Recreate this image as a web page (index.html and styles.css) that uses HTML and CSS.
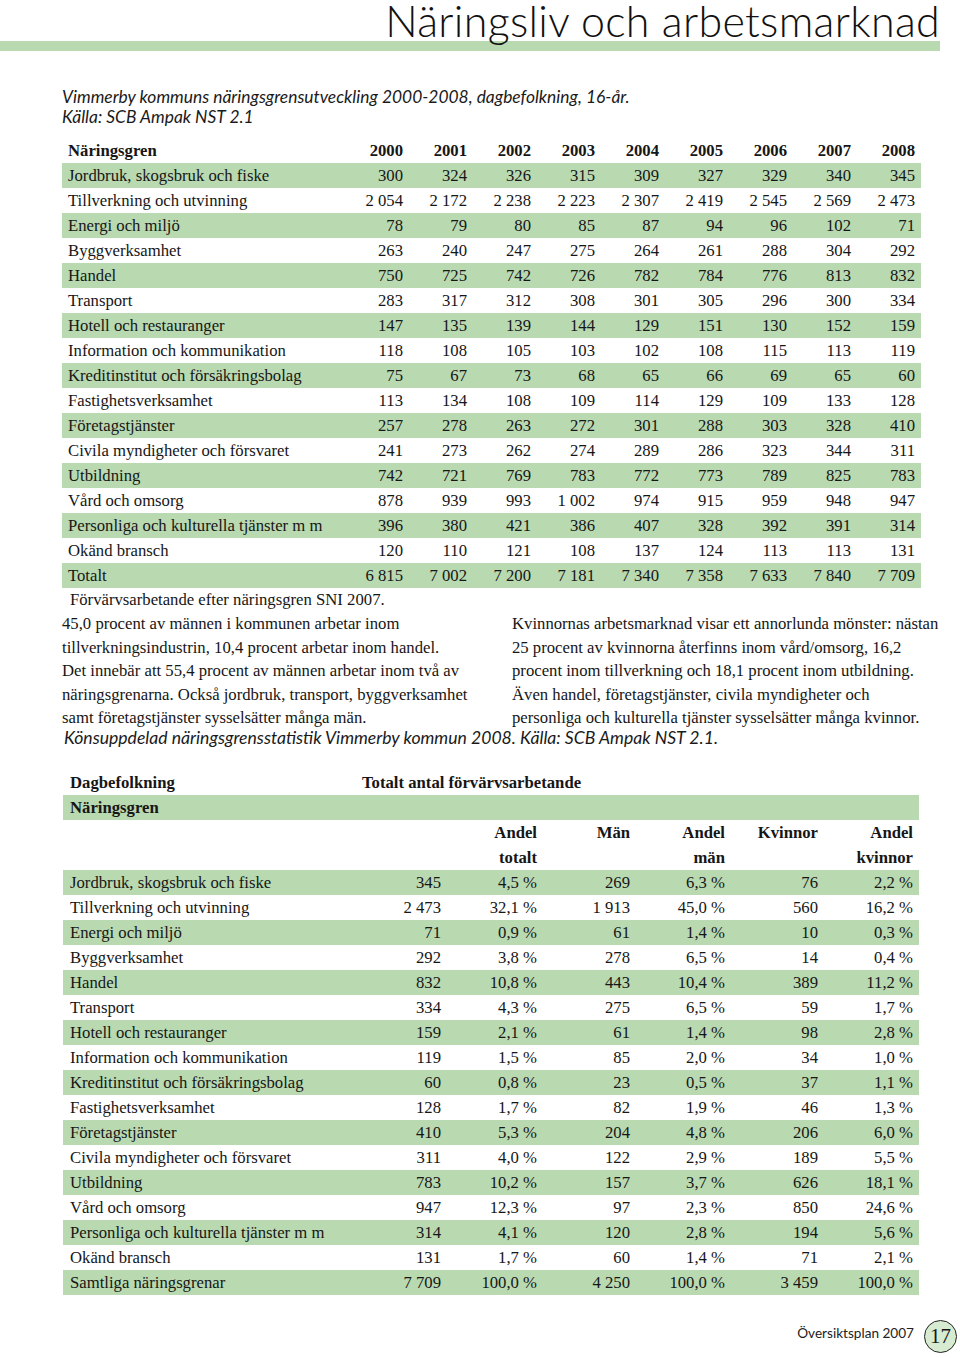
FILE: index.html
```html
<!DOCTYPE html>
<html lang="sv">
<head>
<meta charset="utf-8">
<title>Näringsliv och arbetsmarknad</title>
<link rel="stylesheet" href="styles.css">
</head>
<body>
<div class="page">
  <header class="head">
    <h1 class="title">Näringsliv och arbetsmarknad</h1>
    <div class="rule"></div>
  </header>

  <p class="cap cap-top">Vimmerby kommuns näringsgrensutveckling 2000-2008, dagbefolkning, 16-år.<br>Källa: SCB Ampak NST 2.1</p>

  <table class="t1">
    <colgroup><col class="c-label"><col class="c-num"><col class="c-num"><col class="c-num"><col class="c-num"><col class="c-num"><col class="c-num"><col class="c-num"><col class="c-num"><col class="c-num"></colgroup>
    <thead>
      <tr class="hd"><th>Näringsgren</th><th>2000</th><th>2001</th><th>2002</th><th>2003</th><th>2004</th><th>2005</th><th>2006</th><th>2007</th><th>2008</th></tr>
    </thead>
    <tbody>
      <tr class="g"><td>Jordbruk, skogsbruk och fiske</td><td>300</td><td>324</td><td>326</td><td>315</td><td>309</td><td>327</td><td>329</td><td>340</td><td>345</td></tr>
      <tr><td>Tillverkning och utvinning</td><td>2 054</td><td>2 172</td><td>2 238</td><td>2 223</td><td>2 307</td><td>2 419</td><td>2 545</td><td>2 569</td><td>2 473</td></tr>
      <tr class="g"><td>Energi och miljö</td><td>78</td><td>79</td><td>80</td><td>85</td><td>87</td><td>94</td><td>96</td><td>102</td><td>71</td></tr>
      <tr><td>Byggverksamhet</td><td>263</td><td>240</td><td>247</td><td>275</td><td>264</td><td>261</td><td>288</td><td>304</td><td>292</td></tr>
      <tr class="g"><td>Handel</td><td>750</td><td>725</td><td>742</td><td>726</td><td>782</td><td>784</td><td>776</td><td>813</td><td>832</td></tr>
      <tr><td>Transport</td><td>283</td><td>317</td><td>312</td><td>308</td><td>301</td><td>305</td><td>296</td><td>300</td><td>334</td></tr>
      <tr class="g"><td>Hotell och restauranger</td><td>147</td><td>135</td><td>139</td><td>144</td><td>129</td><td>151</td><td>130</td><td>152</td><td>159</td></tr>
      <tr><td>Information och kommunikation</td><td>118</td><td>108</td><td>105</td><td>103</td><td>102</td><td>108</td><td>115</td><td>113</td><td>119</td></tr>
      <tr class="g"><td>Kreditinstitut och försäkringsbolag</td><td>75</td><td>67</td><td>73</td><td>68</td><td>65</td><td>66</td><td>69</td><td>65</td><td>60</td></tr>
      <tr><td>Fastighetsverksamhet</td><td>113</td><td>134</td><td>108</td><td>109</td><td>114</td><td>129</td><td>109</td><td>133</td><td>128</td></tr>
      <tr class="g"><td>Företagstjänster</td><td>257</td><td>278</td><td>263</td><td>272</td><td>301</td><td>288</td><td>303</td><td>328</td><td>410</td></tr>
      <tr><td>Civila myndigheter och försvaret</td><td>241</td><td>273</td><td>262</td><td>274</td><td>289</td><td>286</td><td>323</td><td>344</td><td>311</td></tr>
      <tr class="g"><td>Utbildning</td><td>742</td><td>721</td><td>769</td><td>783</td><td>772</td><td>773</td><td>789</td><td>825</td><td>783</td></tr>
      <tr><td>Vård och omsorg</td><td>878</td><td>939</td><td>993</td><td>1 002</td><td>974</td><td>915</td><td>959</td><td>948</td><td>947</td></tr>
      <tr class="g"><td>Personliga och kulturella tjänster m m</td><td>396</td><td>380</td><td>421</td><td>386</td><td>407</td><td>328</td><td>392</td><td>391</td><td>314</td></tr>
      <tr><td>Okänd bransch</td><td>120</td><td>110</td><td>121</td><td>108</td><td>137</td><td>124</td><td>113</td><td>113</td><td>131</td></tr>
      <tr class="g"><td>Totalt</td><td>6 815</td><td>7 002</td><td>7 200</td><td>7 181</td><td>7 340</td><td>7 358</td><td>7 633</td><td>7 840</td><td>7 709</td></tr>
    </tbody>
  </table>

  <p class="src">Förvärvsarbetande efter näringsgren SNI 2007.</p>

  <div class="cols">
    <p class="body">45,0 procent av männen i kommunen arbetar inom<br>tillverkningsindustrin, 10,4 procent arbetar inom handel.<br>Det innebär att 55,4 procent av männen arbetar inom två av<br>näringsgrenarna. Också jordbruk, transport, byggverksamhet<br>samt företagstjänster sysselsätter många män.</p>
    <p class="body">Kvinnornas arbetsmarknad visar ett annorlunda mönster: nästan<br>25 procent av kvinnorna återfinns inom vård/omsorg, 16,2<br>procent inom tillverkning och 18,1 procent inom utbildning.<br>Även handel, företagstjänster, civila myndigheter och<br>personliga och kulturella tjänster sysselsätter många kvinnor.</p>
  </div>

  <p class="cap cap-mid">Könsuppdelad näringsgrensstatistik Vimmerby kommun 2008. Källa: SCB Ampak NST 2.1.</p>

  <div class="t2-top"><span class="t2-a">Dagbefolkning</span><span>Totalt antal förvärvsarbetande</span></div>
  <table class="t2">
    <colgroup><col class="d-label"><col class="d-96"><col class="d-96"><col class="d-93"><col class="d-95"><col class="d-93"><col class="d-95"></colgroup>
    <thead>
      <tr class="g hd"><th colspan="7">Näringsgren</th></tr>
      <tr class="hd"><th></th><th></th><th>Andel</th><th>Män</th><th>Andel</th><th>Kvinnor</th><th>Andel</th></tr>
      <tr class="hd"><th></th><th></th><th>totalt</th><th></th><th>män</th><th></th><th>kvinnor</th></tr>
    </thead>
    <tbody>
      <tr class="g"><td>Jordbruk, skogsbruk och fiske</td><td>345</td><td>4,5 %</td><td>269</td><td>6,3 %</td><td>76</td><td>2,2 %</td></tr>
      <tr><td>Tillverkning och utvinning</td><td>2 473</td><td>32,1 %</td><td>1 913</td><td>45,0 %</td><td>560</td><td>16,2 %</td></tr>
      <tr class="g"><td>Energi och miljö</td><td>71</td><td>0,9 %</td><td>61</td><td>1,4 %</td><td>10</td><td>0,3 %</td></tr>
      <tr><td>Byggverksamhet</td><td>292</td><td>3,8 %</td><td>278</td><td>6,5 %</td><td>14</td><td>0,4 %</td></tr>
      <tr class="g"><td>Handel</td><td>832</td><td>10,8 %</td><td>443</td><td>10,4 %</td><td>389</td><td>11,2 %</td></tr>
      <tr><td>Transport</td><td>334</td><td>4,3 %</td><td>275</td><td>6,5 %</td><td>59</td><td>1,7 %</td></tr>
      <tr class="g"><td>Hotell och restauranger</td><td>159</td><td>2,1 %</td><td>61</td><td>1,4 %</td><td>98</td><td>2,8 %</td></tr>
      <tr><td>Information och kommunikation</td><td>119</td><td>1,5 %</td><td>85</td><td>2,0 %</td><td>34</td><td>1,0 %</td></tr>
      <tr class="g"><td>Kreditinstitut och försäkringsbolag</td><td>60</td><td>0,8 %</td><td>23</td><td>0,5 %</td><td>37</td><td>1,1 %</td></tr>
      <tr><td>Fastighetsverksamhet</td><td>128</td><td>1,7 %</td><td>82</td><td>1,9 %</td><td>46</td><td>1,3 %</td></tr>
      <tr class="g"><td>Företagstjänster</td><td>410</td><td>5,3 %</td><td>204</td><td>4,8 %</td><td>206</td><td>6,0 %</td></tr>
      <tr><td>Civila myndigheter och försvaret</td><td>311</td><td>4,0 %</td><td>122</td><td>2,9 %</td><td>189</td><td>5,5 %</td></tr>
      <tr class="g"><td>Utbildning</td><td>783</td><td>10,2 %</td><td>157</td><td>3,7 %</td><td>626</td><td>18,1 %</td></tr>
      <tr><td>Vård och omsorg</td><td>947</td><td>12,3 %</td><td>97</td><td>2,3 %</td><td>850</td><td>24,6 %</td></tr>
      <tr class="g"><td>Personliga och kulturella tjänster m m</td><td>314</td><td>4,1 %</td><td>120</td><td>2,8 %</td><td>194</td><td>5,6 %</td></tr>
      <tr><td>Okänd bransch</td><td>131</td><td>1,7 %</td><td>60</td><td>1,4 %</td><td>71</td><td>2,1 %</td></tr>
      <tr class="g"><td>Samtliga näringsgrenar</td><td>7 709</td><td>100,0 %</td><td>4 250</td><td>100,0 %</td><td>3 459</td><td>100,0 %</td></tr>
    </tbody>
  </table>

  <footer class="foot">
    <span class="foot-txt">Översiktsplan 2007</span>
    <span class="pageno">17</span>
  </footer>
</div>
</body>
</html>
```

FILE: styles.css
```css
* { box-sizing: border-box; }
html, body { margin: 0; padding: 0; background: #fff; }
body { color: #161616; font-family: "Liberation Serif", "Times New Roman", serif; }
.page { width: 960px; height: 1358px; position: relative; overflow: hidden; }

.head { padding-top: 6px; }
.title {
  margin: 0;
  padding-right: 20px;
  text-align: right;
  font-family: "Lato", "DejaVu Sans", sans-serif;
  font-weight: 300;
  font-size: 43px;
  line-height: 29px;
  height: 35px;
  color: #111;
  letter-spacing: 0.3px;
  white-space: nowrap;
}
.rule { width: 940px; height: 10px; background: #b9d9b1; }

.cap {
  margin: 0;
  font-family: "Lato", "DejaVu Sans", sans-serif;
  font-style: italic;
  font-size: 17.4px;
  color: #1a1a1a;
  white-space: nowrap;
}
.cap-top { margin: 36px 0 0 62px; line-height: 20px; height: 51px; }
.cap-mid { margin: 0 0 0 64px; line-height: 16px; height: 16px; font-size: 17.6px; }

table { border-collapse: collapse; table-layout: fixed; font-size: 16.7px; }
td, th { padding: 0 6px 0 0; height: 25px; line-height: 25px; text-align: right; white-space: nowrap; font-weight: normal; }
td:first-child, th:first-child { text-align: left; padding: 0 0 0 6px; }
tr.g td, tr.g th { background: #b9d9b1; }
.hd th { font-weight: bold; }

.t1 { margin-left: 62px; width: 859px; }
.t1 .c-label { width: 283px; }
.t1 .c-num { width: 64px; }

.src { margin: 0 0 0 70px; font-size: 16.7px; line-height: 24px; height: 24px; }

.cols { display: grid; grid-template-columns: 450px 448px; margin-left: 62px; }
.body { margin: 0; font-size: 16.7px; line-height: 23.5px; white-space: nowrap; }

.t2-top { margin: 24px 0 0 63px; padding-left: 7px; height: 25px; line-height: 25px; font-weight: bold; font-size: 16.7px; display: flex; }
.t2-a { width: 292px; }
.t2 { margin-left: 63px; width: 856px; }
.t2 td:first-child, .t2 th:first-child { padding-left: 7px; }
.t2 .d-label { width: 288px; }
.t2 .d-96 { width: 96px; }
.t2 .d-93 { width: 93px; }
.t2 .d-95 { width: 95px; }

.foot { display: flex; align-items: center; justify-content: flex-end; margin-top: 25px; padding-right: 3px; gap: 10px; }
.foot-txt { font-family: "Lato", "DejaVu Sans", sans-serif; font-size: 13.6px; color: #222; margin-bottom: 6px; }
.pageno {
  width: 33px; height: 33px; border-radius: 50%;
  border: 1.5px solid #222; background: #d6ebcf;
  display: flex; align-items: center; justify-content: center;
  font-family: "Liberation Serif", serif; font-size: 21px; line-height: 1;
}
```
